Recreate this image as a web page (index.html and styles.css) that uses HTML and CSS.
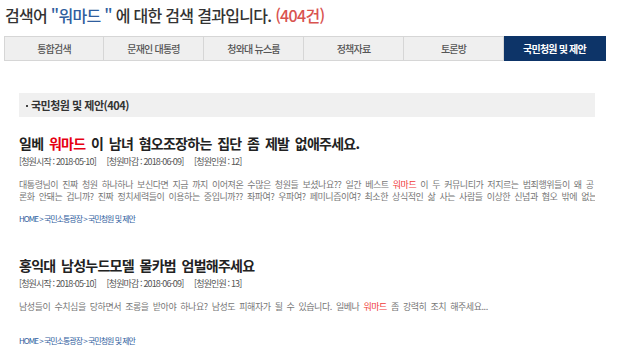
FILE: index.html
```html
<!DOCTYPE html>
<html lang="ko">
<head>
  <meta charset="UTF-8">
  <meta name="viewport" content="width=device-width, initial-scale=1.0">
  <title>검색 결과</title>
  <link rel="stylesheet" href="styles.css">
</head>
<body>
  <div class="search-wrap">
    <h1 class="search-title">검색어 <span class="keyword">"워마드 "</span> 에 대한 검색 결과입니다. <span class="count">(404건)</span></h1>

    <ul class="search-tabs">
      <li>통합검색</li>
      <li>문재인 대통령</li>
      <li>청와대 뉴스룸</li>
      <li>정책자료</li>
      <li>토론방</li>
      <li class="active">국민청원 및 제안</li>
    </ul>

    <div class="section-head">국민청원 및 제안(404)</div>

    <div class="result-list">
      <div class="result-item">
        <h2 class="result-title">일베 <em>워마드</em> 이 남녀 혐오조장하는 집단 좀 제발 없애주세요.</h2>
        <div class="result-meta">
          <span>[청원시작 : 2018-05-10]</span>
          <span>[청원마감 : 2018-06-09]</span>
          <span>[청원인원 : 12]</span>
        </div>
        <p class="result-desc">대통령님이 진짜 청원 하나하나 보신다면 지금 까지 이어져온 수많은 청원들 보셨나요?? 일간 베스트 <em>워마드</em> 이 두 커뮤니티가 저지르는 범죄행위들이 왜 공<br>론화 안돼는 겁니까? 진짜 정치세력들이 이용하는 중입니까?? 좌파여? 우파여? 페미니즘이여? 최소한 상식적인 삶 사는 사람들 이상한 신념과 혐오 밖에 없는 집단들을 왜 그냥 두는 겁니까?</p>
        <div class="result-path">HOME &gt; 국민소통광장 &gt; 국민청원 및 제안</div>
      </div>

      <div class="result-item">
        <h2 class="result-title">홍익대 남성누드모델 몰카범 엄벌해주세요</h2>
        <div class="result-meta">
          <span>[청원시작 : 2018-05-10]</span>
          <span>[청원마감 : 2018-06-09]</span>
          <span>[청원인원 : 13]</span>
        </div>
        <p class="result-desc">남성들이 수치심을 당하면서 조롱을 받아야 하나요? 남성도 피해자가 될 수 있습니다. 일베나 <em>워마드</em> 좀 강력히 조치 해주세요...</p>
        <div class="result-path">HOME &gt; 국민소통광장 &gt; 국민청원 및 제안</div>
      </div>
    </div>
  </div>
</body>
</html>
```

FILE: styles.css
```css
body {
  margin: 0;
  background-color: #fff;
  font-family: "Noto Sans CJK KR", "Noto Sans", sans-serif;
  color: #333;
}
.search-wrap {
  width: 602px;
  padding-left: 4px;
}
.search-title {
  margin: 3px 0 0 1px;
  font-size: 16px;
  font-weight: 500;
  line-height: 24px;
  letter-spacing: -0.7px;
  color: #333;
}
.search-title .keyword {
  color: #2f5e9e;
}
.search-title .count {
  color: #d9534f;
}
.search-tabs {
  display: grid;
  grid-template-columns: 100px 100px 100px 100px 100px 102px;
  margin: 9px 0 0 0;
  padding: 0;
  list-style: none;
}
.search-tabs li {
  height: 23px;
  line-height: 23px;
  text-align: center;
  font-size: 10px;
  font-weight: 500;
  letter-spacing: -0.8px;
  color: #555;
  background-color: #efefef;
  border: 1px solid #d6d6d6;
  border-left: none;
}
.search-tabs li:first-child {
  border-left: 1px solid #d6d6d6;
}
.search-tabs li.active {
  background-color: #0d3468;
  border-color: #0d3468;
  color: #fff;
  font-weight: bold;
}
.section-head {
  margin: 32px 0 0 15px;
  width: 564px;
  height: 24px;
  line-height: 24px;
  padding-left: 12px;
  background-color: #f0f0f0;
  font-size: 11px;
  font-weight: bold;
  letter-spacing: -0.5px;
  color: #333;
  position: relative;
}
.section-head::before {
  content: "";
  position: absolute;
  left: 7px;
  top: 12px;
  width: 2px;
  height: 2px;
  background-color: #444;
}
.result-list {
  margin: 16px 0 0 15px;
  width: 576px;
}
.result-item {
  margin-bottom: 30px;
}
.result-title {
  margin: 0;
  font-size: 14px;
  font-weight: bold;
  line-height: 20px;
  letter-spacing: -0.75px;
  word-spacing: 2.5px;
  color: #222;
}
.result-title em {
  font-style: normal;
  color: #e60012;
}
.result-meta {
  margin-top: 2px;
  font-size: 9px;
  line-height: 13px;
  letter-spacing: -0.85px;
  color: #555;
}
.result-meta span {
  margin-right: 9px;
}
.result-desc {
  margin: 11px 0 0 0;
  height: 24px;
  overflow: hidden;
  white-space: nowrap;
  font-size: 9px;
  line-height: 12px;
  letter-spacing: -0.45px;
  word-spacing: 2px;
  color: #777;
}
.result-desc em {
  font-style: normal;
  color: #f03a3a;
}
.result-path {
  margin-top: 10px;
  font-size: 8px;
  line-height: 12px;
  letter-spacing: -1px;
  color: #2f5e9e;
}
```
